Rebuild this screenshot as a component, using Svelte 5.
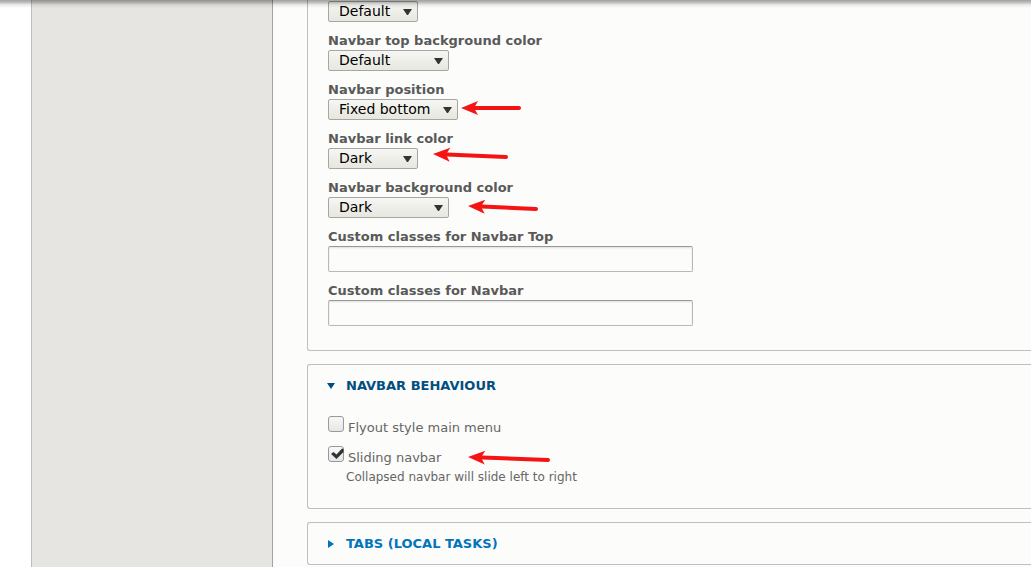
<script lang="ts">
	let selects = $state([
		{ id: 'navbar-top-position', label: '', size: 'small', value: 'Default', options: ['Default', 'Dark'] },
		{
			id: 'navbar-top-background',
			label: 'Navbar top background color',
			size: 'medium',
			value: 'Default',
			options: ['Default', 'Dark']
		},
		{
			id: 'navbar-position',
			label: 'Navbar position',
			size: 'large',
			value: 'Fixed bottom',
			options: ['Default', 'Fixed bottom']
		},
		{ id: 'navbar-color', label: 'Navbar link color', size: 'small', value: 'Dark', options: ['Default', 'Dark'] },
		{
			id: 'navbar-background',
			label: 'Navbar background color',
			size: 'medium',
			value: 'Dark',
			options: ['Default', 'Dark']
		}
	]);

	let inputs = $state([
		{ id: 'navbar-top-class', label: 'Custom classes for Navbar Top', value: '' },
		{ id: 'navbar-class', label: 'Custom classes for Navbar', value: '' }
	]);

	let flyout = $state(false);
	let sliding = $state(true);
	let behaviourOpen = $state(true);
	let tabsOpen = $state(false);

	// head and tail of every arrow, in page pixels
	const arrows = [
		{ x: 461, y: 108, tx: 521, ty: 108 },
		{ x: 433, y: 154, tx: 508, ty: 157 },
		{ x: 468, y: 206, tx: 538, ty: 209 },
		{ x: 468, y: 457, tx: 550, ty: 460 }
	];

	function arrowTransform(a) {
		const angle = (Math.atan2(a.ty - a.y, a.tx - a.x) * 180) / Math.PI;
		return `translate(${a.x} ${a.y}) rotate(${angle})`;
	}
</script>

<div class="page">
	<div class="tray"></div>
	<main>
		<section class="panel panel-first">
			{#each selects as field (field.id)}
				<div class="field">
					{#if field.label}
						<label for={field.id}>{field.label}</label>
					{/if}
					<div class="select-wrap {field.size}">
						<select id={field.id} bind:value={field.value} aria-label={field.label || 'Navbar top position'}>
							{#each field.options as option}
								<option>{option}</option>
							{/each}
						</select>
						<svg class="caret" viewBox="0 0 9 6" aria-hidden="true"><path d="M0 0h9L5 6H4z" /></svg>
					</div>
				</div>
			{/each}
			{#each inputs as field (field.id)}
				<div class="field">
					<label for={field.id}>{field.label}</label>
					<input type="text" id={field.id} bind:value={field.value} />
				</div>
			{/each}
		</section>

		<details class="panel" bind:open={behaviourOpen}>
			<summary>
				<svg class="marker" viewBox="1 0 8 8" aria-hidden="true">
					<path d={behaviourOpen ? 'M0 1h8L4 7z' : 'M1 0l6 4-6 4z'} />
				</svg>
				Navbar behaviour
			</summary>
			<div class="options">
				<div class="check">
					<input type="checkbox" id="flyout" bind:checked={flyout} />
					<label for="flyout">Flyout style main menu</label>
				</div>
				<div class="check">
					<span class="box">
						<input type="checkbox" id="sliding" bind:checked={sliding} aria-describedby="sliding-help" />
						{#if sliding}
							<svg class="tick" viewBox="0 0 16 16" aria-hidden="true">
								<path d="M3 8l2.500-2L8.500 8.500 14 2.500l1.500 .5V6L8.500 13z" />
							</svg>
						{/if}
					</span>
					<label for="sliding">Sliding navbar</label>
				</div>
				<p id="sliding-help">Collapsed navbar will slide left to right</p>
			</div>
		</details>

		<details class="panel" bind:open={tabsOpen}>
			<summary class="closed">
				<svg class="marker" viewBox="1 0 8 8" aria-hidden="true">
					<path d={tabsOpen ? 'M0 1h8L4 7z' : 'M1 0l6 4-6 4z'} />
				</svg>
				Tabs (local tasks)
			</summary>
		</details>
	</main>

	<svg class="arrows" aria-hidden="true">
		{#each arrows as a}
			<g transform={arrowTransform(a)}>
				<path d="M14 0H{Math.hypot(a.tx - a.x, a.ty - a.y) - 2}" class="shaft" />
				<path d="M0 0L17-7 13 0 17 7z" class="head" />
			</g>
		{/each}
	</svg>
	<div class="toolbar-shadow"></div>
</div>

<style>
	:global(body) {
		margin: 0;
		background: #fff;
	}

	.page {
		position: relative;
		display: flex;
		min-height: 100vh;
		padding-left: 31px;
		box-sizing: border-box;
		overflow: hidden;
		font-family: 'DejaVu Sans', sans-serif;
		font-size: 13px;
		color: #595959;
	}

	.tray {
		flex: 0 0 240px;
		background: #e6e5e1;
		border-left: 1px solid #bebdbb;
		border-right: 1px solid #a3a3a1;
	}

	main {
		flex: 1;
		display: flex;
		flex-direction: column;
		gap: 13px;
		padding-left: 34px;
		background: #fcfcfa;
	}

	.panel {
		border: 1px solid #bfbfbd;
		border-right: 0;
		border-radius: 3px 0 0 3px;
		padding: 11px 20px 10px;
	}

	.panel-first {
		display: flex;
		flex-direction: column;
		gap: 10px;
		border-top: 0;
		border-top-left-radius: 0;
		padding: 1px 20px 24px;
	}

	.field label {
		display: block;
		width: max-content;
		line-height: 18px;
		font-weight: bold;
	}

	.select-wrap {
		position: relative;
		height: 21px;
	}
	.small {
		width: 90px;
	}
	.medium {
		width: 121px;
	}
	.large {
		width: 130px;
	}

	select {
		appearance: none;
		display: block;
		width: 100%;
		height: 21px;
		margin: 0;
		padding: 0 20px 1px 10px;
		border: 1px solid #a6a6a6;
		border-radius: 2px;
		background: linear-gradient(#f6f6f3, #e7e7df);
		font-family: inherit;
		font-size: 14px;
		color: #000;
	}

	.caret {
		position: absolute;
		top: 8px;
		right: 6px;
		width: 9px;
		height: 6px;
		fill: #333;
		pointer-events: none;
	}

	input[type='text'] {
		display: block;
		box-sizing: border-box;
		width: 365px;
		max-width: 100%;
		height: 26px;
		padding: 4px 8px;
		border: 1px solid #b8b8b8;
		border-top-color: #999;
		border-radius: 2px;
		background: #fcfcfa;
		box-shadow: inset 0 1px 2px rgba(0, 0, 0, 0.12);
		font: inherit;
	}

	summary {
		display: flex;
		align-items: center;
		gap: 10px;
		line-height: 20px;
		font-weight: bold;
		text-transform: uppercase;
		color: #004f80;
		cursor: pointer;
	}
	summary.closed {
		color: #0074bd;
	}

	.marker {
		width: 8px;
		height: 8px;
		fill: currentColor;
		overflow: visible;
	}

	.options {
		padding: 20px 0 10px;
		color: #666;
	}

	.check {
		display: flex;
		align-items: flex-start;
		gap: 4px;
		height: 20px;
	}
	.check + .check {
		margin-top: 10px;
	}
	.check label {
		padding-top: 4px;
		line-height: 16px;
	}

	.box {
		position: relative;
		display: flex;
	}

	input[type='checkbox'] {
		appearance: none;
		width: 16px;
		height: 16px;
		margin: 0;
		border: 1px solid #999;
		border-radius: 3px;
		background: linear-gradient(#f8f8f8, #e6e6e6);
	}

	.tick {
		position: absolute;
		inset: 0;
		fill: #2e3436;
		pointer-events: none;
	}

	p {
		margin: 0;
		padding-left: 18px;
		font-size: 12px;
		line-height: 22px;
	}

	.arrows {
		position: absolute;
		inset: 0;
		width: 100%;
		height: 100%;
		pointer-events: none;
	}
	.shaft {
		stroke: #f51414;
		stroke-width: 4;
		stroke-linecap: round;
	}
	.head {
		fill: #f51414;
	}

	.toolbar-shadow {
		position: absolute;
		top: 0;
		left: 0;
		right: 0;
		height: 8px;
		background: linear-gradient(rgba(0, 0, 0, 0.36), rgba(0, 0, 0, 0.28) 25%, rgba(0, 0, 0, 0.08) 60%, transparent);
		pointer-events: none;
	}
</style>
